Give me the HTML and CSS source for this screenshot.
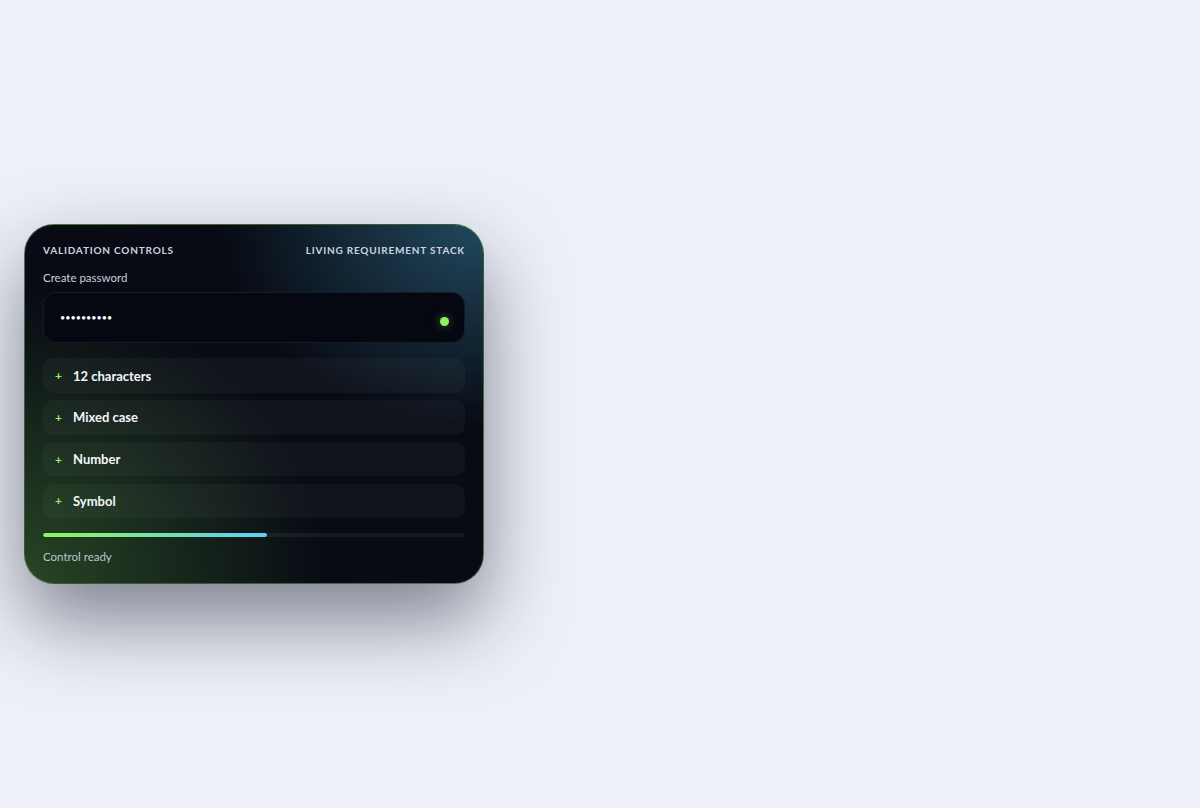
FILE: index.html
```html
<!DOCTYPE html>
<html lang="en">
<head>
<meta charset="utf-8">
<title>Validation Controls</title>
<link rel="stylesheet" href="styles.css">
</head>
<body>
<main class="stage">
  <section class="card">
    <header class="card-head">
      <span class="eyebrow">Validation Controls</span>
      <span class="eyebrow">Living Requirement Stack</span>
    </header>
    <label class="field-label">Create password</label>
    <div class="field">
      <span class="dots">••••••••••</span>
      <span class="status-dot"></span>
    </div>
    <ul class="reqs">
      <li class="req"><span class="plus">+</span><span class="req-text">12 characters</span></li>
      <li class="req"><span class="plus">+</span><span class="req-text">Mixed case</span></li>
      <li class="req"><span class="plus">+</span><span class="req-text">Number</span></li>
      <li class="req"><span class="plus">+</span><span class="req-text">Symbol</span></li>
    </ul>
    <div class="meter"><div class="meter-fill" style="width:53%"></div></div>
    <p class="status">Control ready</p>
  </section>
</main>
</body>
</html>
```
FILE: styles.css
```css
* { box-sizing: border-box; }
html, body { margin: 0; padding: 0; }
body {
  background: #edf0f8;
  font-family: Lato, "Open Sans", sans-serif;
}
.stage {
  min-height: 808px;
  display: flex;
  align-items: center;
  padding: 0 24px;
}
.card {
  width: 460px;
  border-radius: 30px;
  border: 1px solid rgba(110, 170, 75, 0.5);
  padding: 18px;
  color: #fff;
  background:
    radial-gradient(ellipse 260px 200px at 100% 0%, rgba(40, 90, 115, 0.78), rgba(40, 90, 115, 0) 100%),
    radial-gradient(ellipse 300px 290px at 0% 100%, rgba(45, 80, 40, 0.85), rgba(45, 80, 40, 0) 100%),
    #080b14;
  box-shadow: 0 36px 80px rgba(15, 20, 35, 0.5);
  display: flex;
  flex-direction: column;
}
.card-head {
  display: flex;
  justify-content: space-between;
}
.eyebrow {
  font-size: 10px;
  font-weight: 700;
  text-transform: uppercase;
  letter-spacing: 0.8px;
  color: #ccd3e0;
  line-height: 14px;
}
.field-label {
  margin-top: 13px;
  font-size: 11.5px;
  color: #c9cfdc;
  line-height: 16px;
}
.field {
  flex-shrink: 0;
  margin-top: 6px;
  height: 51px;
  border-radius: 13px;
  background: #050711;
  border: 1px solid rgba(255, 255, 255, 0.08);
  display: flex;
  align-items: center;
  justify-content: space-between;
  padding: 0 15px 0 16px;
}
.dots {
  font-size: 9px;
  color: #fff;
  margin-top: -1px;
}
.status-dot {
  width: 9px;
  height: 9px;
  border-radius: 50%;
  background: #8ef55b;
  box-shadow: 0 0 10px rgba(142, 245, 91, 0.45);
  margin-top: 8px;
}
.reqs {
  list-style: none;
  margin: 15px 0 0;
  padding: 0;
  display: flex;
  flex-direction: column;
  gap: 7.2px;
}
.req {
  flex-shrink: 0;
  height: 34.5px;
  border-radius: 10px;
  background: rgba(255, 255, 255, 0.035);
  display: flex;
  align-items: center;
  padding: 0 12px;
}
.plus {
  color: #8ef55b;
  font-size: 12px;
  font-weight: 700;
  width: 18px;
}
.req-text {
  font-size: 13px;
  font-weight: 700;
  color: #f4f6fa;
}
.meter {
  flex-shrink: 0;
  margin-top: 14.5px;
  height: 4px;
  border-radius: 2px;
  background: rgba(255, 255, 255, 0.06);
  overflow: hidden;
}
.meter-fill {
  height: 100%;
  border-radius: 2px;
  background: linear-gradient(90deg, #8ef55b, #5ad0f7);
}
.status {
  margin: 12px 0 0;
  font-size: 11.5px;
  color: #bcc3cf;
  line-height: 16px;
}
```
